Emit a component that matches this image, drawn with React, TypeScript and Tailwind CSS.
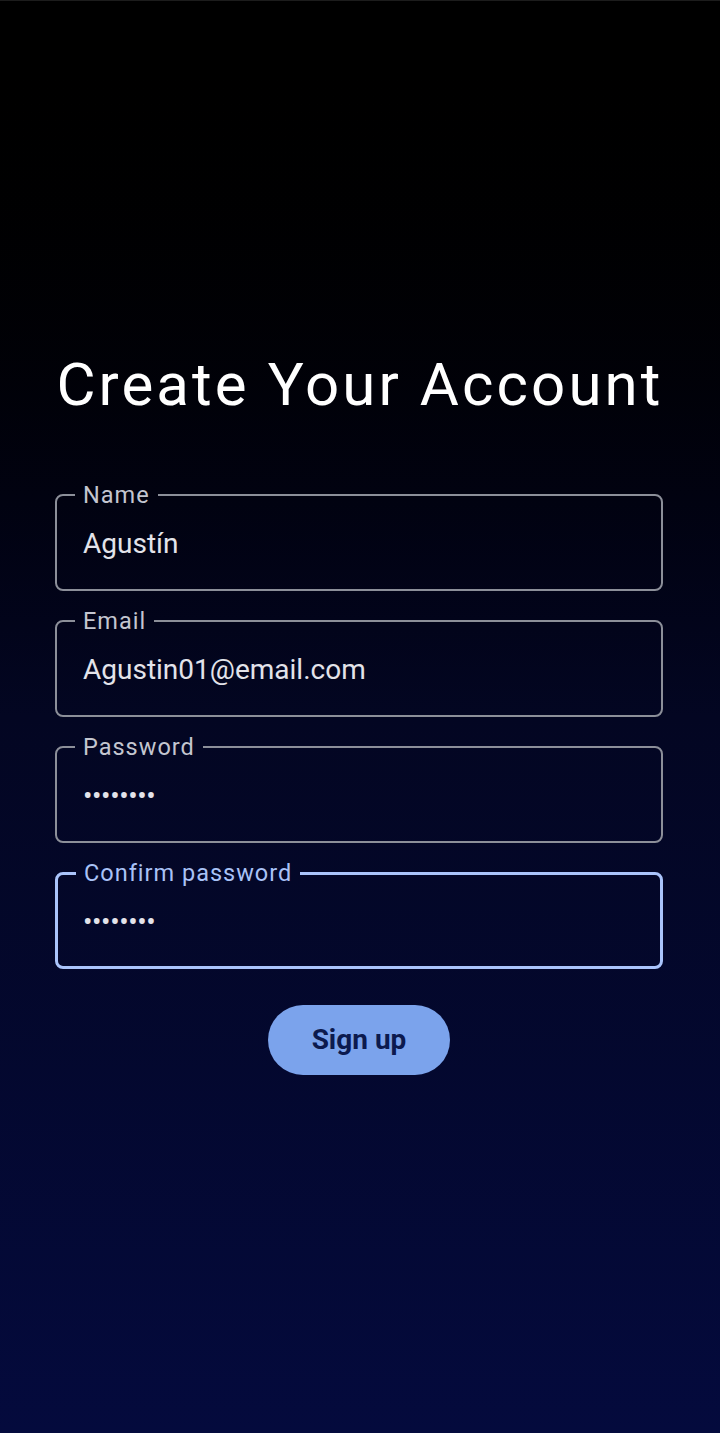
import React from "react";

function Field({ label, value, focused, password }: { label: string; value: string; focused?: boolean; password?: boolean }) {
  return (
    <fieldset
      className={
        focused
          ? "h-[108px] rounded-[8px] border-[3px] border-[#aac4fb] pl-[25px] pr-4"
          : "h-[108px] rounded-[8px] border-[2px] border-[#8c8f99] pl-[26px] pr-4"
      }
    >
      <legend
        className={
          focused
            ? "ml-[-7px] px-[8px] text-[23.5px] leading-[24px] tracking-[1px] text-[#a9c2f7]"
            : "ml-[-8px] px-[8px] text-[23.5px] leading-[24px] tracking-[1px] text-[#c4c6d0]"
        }
      >
        {label}
      </legend>
      <div
        className={
          password
            ? "mt-[20px] text-[28px] leading-[34px] tracking-[-0.4px] text-[#e3e3ea]"
            : "mt-[20px] text-[28px] leading-[34px] tracking-[0px] text-[#e3e3ea]"
        }
      >
        {value}
      </div>
    </fieldset>
  );
}

export default function App() {
  return (
    <div
      className="min-h-[1433px] w-full bg-gradient-to-b from-[#000000] via-[#030622] to-[#040a3d] flex flex-col items-center"
      style={{ fontFamily: "Roboto, 'Noto Sans', sans-serif" }}
    >
      <div className="h-px w-full bg-[#1c1c1c]" />
      <h1 className="mt-[344px] text-[60px] leading-[80px] tracking-[3.1px] text-white font-normal">
        Create Your Account
      </h1>
      <div className="mt-[58px] w-full pl-[55px] pr-[57px] flex flex-col gap-[18px]">
        <Field label="Name" value="Agustín" />
        <Field label="Email" value="Agustin01@email.com" />
        <Field label="Password" value="••••••••" password />
        <Field label="Confirm password" value="••••••••" password focused />
      </div>
      <button className="mt-[36px] ml-[-2px] h-[70px] w-[182px] rounded-full bg-[#7ba3ec] text-[28px] font-bold text-[#0c1a4e]">
        Sign up
      </button>
    </div>
  );
}
